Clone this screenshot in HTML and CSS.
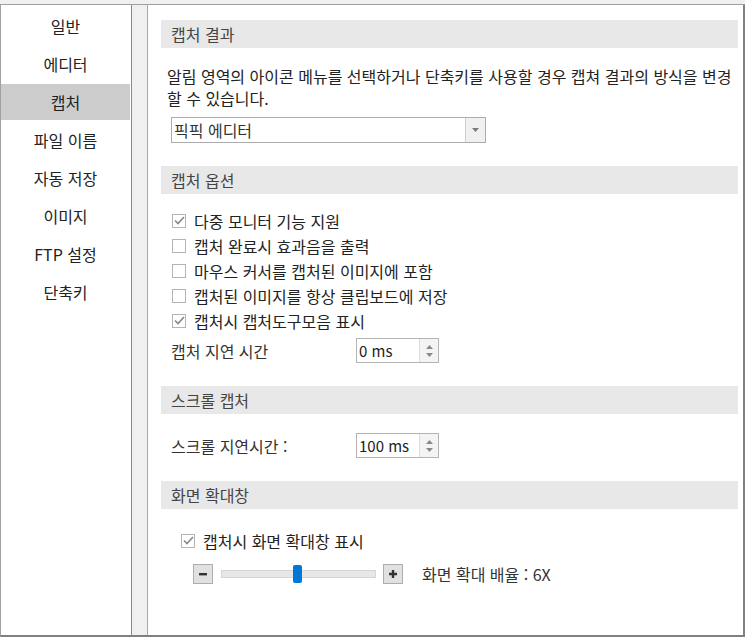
FILE: index.html
```html
<!DOCTYPE html>
<html lang="ko">
<head>
    <meta charset="UTF-8">
    <meta name="viewport" content="width=device-width, initial-scale=1.0">
    <title>환경 설정 - 캡처</title>
    <link rel="stylesheet" href="styles.css">
</head>
<body>

    <div class="window">
        <ul class="sidebar">
            <li class="menu-item">일반</li>
            <li class="menu-item">에디터</li>
            <li class="menu-item active">캡처</li>
            <li class="menu-item">파일 이름</li>
            <li class="menu-item">자동 저장</li>
            <li class="menu-item">이미지</li>
            <li class="menu-item">FTP 설정</li>
            <li class="menu-item">단축키</li>
        </ul>

        <div class="content">
            <h2 class="section-title">캡처 결과</h2>
            <p class="desc">알림 영역의 아이콘 메뉴를 선택하거나 단축키를 사용할 경우 캡쳐 결과의 방식을 변경 할 수 있습니다.</p>
            <div class="select">
                <span class="select-value">픽픽 에디터</span>
                <span class="select-btn">
                    <svg width="7" height="4" viewBox="0 0 7 4"><path d="M0 0h7L3.5 4z" fill="#7a7a7a"/></svg>
                </span>
            </div>

            <h2 class="section-title title-gap">캡처 옵션</h2>
            <div class="checks">
                <label class="check"><span class="box checked"><svg width="11" height="9" viewBox="0 0 11 9"><path d="M1 4.5l3 3L10 1" fill="none" stroke="#8a8a8a" stroke-width="1.7"/></svg></span>다중 모니터 기능 지원</label>
                <label class="check"><span class="box"></span>캡처 완료시 효과음을 출력</label>
                <label class="check"><span class="box"></span>마우스 커서를 캡처된 이미지에 포함</label>
                <label class="check"><span class="box"></span>캡처된 이미지를 항상 클립보드에 저장</label>
                <label class="check"><span class="box checked"><svg width="11" height="9" viewBox="0 0 11 9"><path d="M1 4.5l3 3L10 1" fill="none" stroke="#8a8a8a" stroke-width="1.7"/></svg></span>캡처시 캡처도구모음 표시</label>
            </div>
            <div class="field-row row-delay">
                <span class="field-label">캡처 지연 시간</span>
                <div class="spin">
                    <span class="spin-value">0 ms</span>
                    <span class="spin-btns">
                        <svg width="7" height="4" viewBox="0 0 7 4"><path d="M0 4h7L3.5 0z" fill="#8a8a8a"/></svg>
                        <svg width="7" height="4" viewBox="0 0 7 4"><path d="M0 0h7L3.5 4z" fill="#8a8a8a"/></svg>
                    </span>
                </div>
            </div>

            <h2 class="section-title title-gap">스크롤 캡처</h2>
            <div class="field-row row-scroll">
                <span class="field-label">스크롤 지연시간 :</span>
                <div class="spin">
                    <span class="spin-value">100 ms</span>
                    <span class="spin-btns">
                        <svg width="7" height="4" viewBox="0 0 7 4"><path d="M0 4h7L3.5 0z" fill="#8a8a8a"/></svg>
                        <svg width="7" height="4" viewBox="0 0 7 4"><path d="M0 0h7L3.5 4z" fill="#8a8a8a"/></svg>
                    </span>
                </div>
            </div>

            <h2 class="section-title title-gap">화면 확대창</h2>
            <label class="check check-zoom"><span class="box checked"><svg width="11" height="9" viewBox="0 0 11 9"><path d="M1 4.5l3 3L10 1" fill="none" stroke="#8a8a8a" stroke-width="1.7"/></svg></span>캡처시 화면 확대창 표시</label>
            <div class="zoom-row">
                <span class="step-btn">
                    <svg width="10" height="10" viewBox="0 0 10 10"><path d="M1 4h8v2.4H1z" fill="#333"/></svg>
                </span>
                <div class="track">
                    <span class="thumb"></span>
                </div>
                <span class="step-btn">
                    <svg width="10" height="10" viewBox="0 0 10 10"><path d="M1 3.8h8v2.4H1zM3.8 1h2.4v8H3.8z" fill="#333"/></svg>
                </span>
                <span class="zoom-label">화면 확대 배율 : 6X</span>
            </div>
        </div>
    </div>

</body>
</html>
```

FILE: styles.css
```css
/* Reset básico */
* {
    margin: 0;
    padding: 0;
    box-sizing: border-box;
}

body {
    background-color: #f0f0f0;
    font-family: "Noto Sans CJK KR", "Noto Sans", sans-serif;
    font-size: 16px;
    color: #222;
}

.window {
    display: flex;
    margin-top: 4px;
    height: 633px;
    border-top: 1px solid #a0a0a0;
    border-left: 1px solid #a0a0a0;
    border-bottom: 2px solid #808080;
}

/* menu lateral */
.sidebar {
    list-style: none;
    width: 131px;
    padding-top: 3px;
    background: #fff;
    border-right: 1px solid #8a8a8a;
}

.menu-item {
    height: 36px;
    line-height: 36px;
    margin-bottom: 2px;
    margin-right: 1px;
    text-align: center;
    color: #222;
}

.menu-item.active {
    background: #cccccc;
}

/* painel */
.content {
    flex: 1;
    margin-left: 15px;
    padding: 15px 5px 0 13px;
    background: #fff;
    border-left: 1px solid #a8a8a8;
    border-right: 2px solid #808080;
}

.section-title {
    height: 28px;
    line-height: 28px;
    padding-left: 10px;
    font-size: 16px;
    font-weight: normal;
    color: #444;
    background: #e8e8e8;
}

.title-gap {
    margin-top: 23px;
}

.desc {
    margin-top: 17px;
    margin-left: 6px;
    line-height: 22px;
    color: #222;
}

.select {
    display: flex;
    width: 315px;
    height: 26px;
    margin-top: 8px;
    margin-left: 10px;
    border: 1px solid #acacac;
    background: #fff;
}

.select-value {
    flex: 1;
    line-height: 24px;
    padding-left: 2px;
    color: #333;
}

.select-btn {
    display: flex;
    align-items: center;
    justify-content: center;
    width: 20px;
    background: #f0f0f0;
    border-left: 1px solid #d0d0d0;
}

.checks {
    margin-top: 14px;
}

.check {
    display: flex;
    align-items: center;
    height: 25px;
    padding-left: 11px;
    color: #222;
}

.box {
    display: flex;
    align-items: center;
    justify-content: center;
    width: 14px;
    height: 14px;
    margin-right: 8px;
    border: 1px solid #b4b4b4;
    background: #fff;
}

.field-row {
    display: flex;
    align-items: center;
    padding-left: 10px;
}

.row-delay {
    margin-top: 5px;
}

.row-scroll {
    margin-top: 19px;
}

.field-label {
    width: 185px;
    color: #333;
}

.spin {
    display: flex;
    width: 83px;
    height: 25px;
    border: 1px solid #b4b4b4;
    background: #fff;
}

.spin-value {
    flex: 1;
    line-height: 23px;
    padding-left: 2px;
    font-size: 15px;
    color: #222;
}

.spin-btns {
    display: flex;
    flex-direction: column;
    align-items: center;
    justify-content: center;
    gap: 4px;
    width: 19px;
    background: #f4f4f4;
    border-left: 1px solid #dcdcdc;
}

.check-zoom {
    margin-top: 19px;
    padding-left: 20px;
}

.zoom-row {
    display: flex;
    align-items: center;
    margin-top: 9px;
    padding-left: 32px;
}

.step-btn {
    display: flex;
    align-items: center;
    justify-content: center;
    width: 20px;
    height: 20px;
    background: #e1e1e1;
    border: 1px solid #adadad;
}

.track {
    position: relative;
    width: 155px;
    height: 8px;
    margin: 0 7px 0 8px;
    background: #e7e7e7;
    border: 1px solid #d6d6d6;
}

.thumb {
    position: absolute;
    left: 71px;
    top: -6px;
    width: 9px;
    height: 18px;
    border-radius: 2px;
    background: #0078d7;
}

.zoom-label {
    margin-left: 19px;
    color: #333;
}
```
